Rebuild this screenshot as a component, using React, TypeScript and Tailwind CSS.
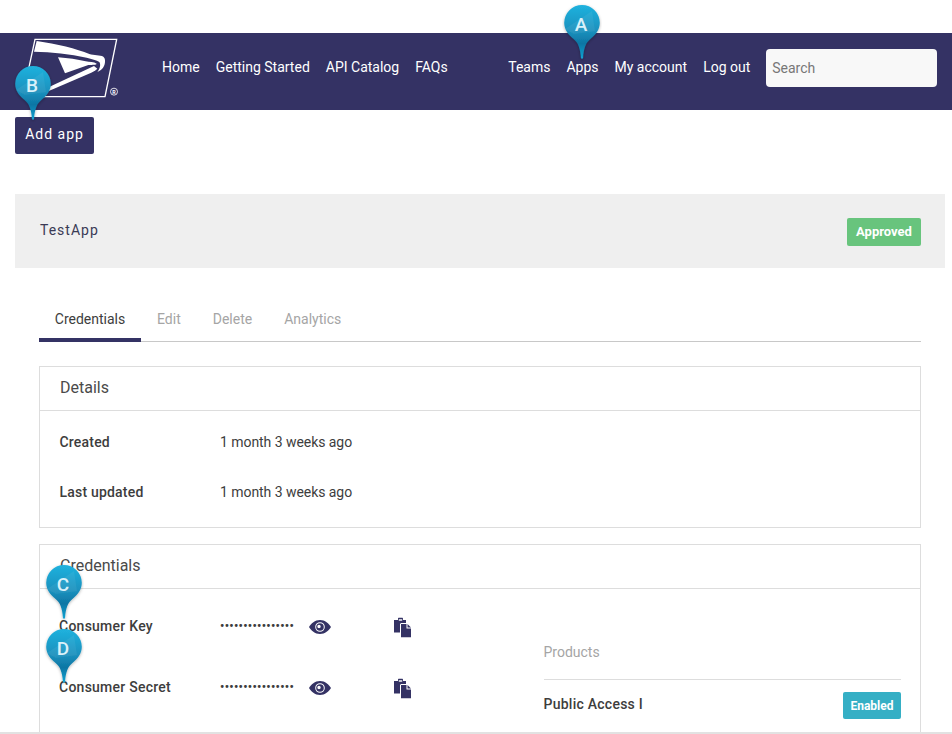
import React from "react";

function Pin({ letter, className }: { letter: string; className: string }) {
  const id = `pin-${letter}`;
  const shape =
    "M20 2a17.8 17.800 0 0 1 17.800 17.800c0 7-4 11.800-9.400 16.200-4.400 3.600-6.600 8.400-7.400 19.500h-2c-.8-11.100-3-15.900-7.400-19.500C6.200 31.600 2.200 26.800 2.200 19.800A17.800 17.800 0 0 1 20 2z";
  return (
    <div className={`absolute w-[40px] h-[58px] ${className}`}>
      <svg width="40" height="58" viewBox="0 0 40 58" className="absolute inset-0">
        <defs>
          <linearGradient id={id} x1="0" y1="0" x2="0" y2="1">
            <stop offset="0" stopColor="#20b2de" />
            <stop offset="0.5" stopColor="#1a8fbc" />
            <stop offset="0.72" stopColor="#0d76a4" />
            <stop offset="1" stopColor="#12a3d2" />
          </linearGradient>
          <filter id={`${id}-s`} x="-30%" y="-30%" width="160%" height="160%">
            <feDropShadow dx="0" dy="1" stdDeviation="1.6" floodColor="#000" floodOpacity="0.3" />
          </filter>
        </defs>
        <path d={shape} fill={`url(#${id})`} filter={`url(#${id}-s)`} />
        <path d="M3 26 30 8 33 28 12 31z" fill="#fff" opacity="0.06" />
      </svg>
      <span className="absolute left-0 right-[2px] top-[11px] text-center text-[19px] leading-[22px] text-[#d9f1fa] font-medium">
        {letter}
      </span>
    </div>
  );
}

function Logo() {
  return (
    <svg width="105" height="70" viewBox="0 0 315 210" className="shrink-0 ml-[20px] mt-px">
      <path d="M45 16H290L255 188H8z" fill="none" stroke="#fff" strokeWidth="4" />
      <path
        d="M50 21C110 30 170 44 208 60C222 65 240 62 250 68C258 74 256 90 250 100C246 107 240 111 232 114C240 104 243 92 238 84C230 78 215 76 200 71C150 60 95 54 42 53z"
        fill="#fff"
      />
      <path d="M114 70C145 72 172 76 197 82C208 84 222 84 230 89C228 93 220 92 205 93L135 118z" fill="#fff" />
      <path d="M60 172 222 96 232 104 C225 110 218 114 205 120L88 170z" fill="#fff" />
      <circle cx="282" cy="173" r="10.500" fill="none" stroke="#fff" strokeWidth="2.500" />
      <text x="282" y="179" textAnchor="middle" fontSize="16" fontWeight="700" fill="#fff" fontFamily="Roboto, sans-serif">R</text>
    </svg>
  );
}

function Eye() {
  return (
    <svg width="22" height="14" viewBox="0 0 22 14" className="block translate-y-px">
      <path
        fillRule="evenodd"
        d="M11 0c5 0 9 3.400 11 7-2 3.600-6 7-11 7S2 10.600 0 7c2-3.600 6-7 11-7zm0 2.200a4.800 4.800 0 1 0 0 9.600 4.800 4.800 0 0 0 0-9.600z"
        fill="#343264"
      />
      <path
        fillRule="evenodd"
        d="M11 3.200a3.800 3.800 0 1 0 0 7.600 3.800 3.800 0 0 0 0-7.600zm-1 1.600a1.700 1.700 0 1 1 0 3.400 1.700 1.700 0 0 1 0-3.400z"
        fill="#343264"
      />
    </svg>
  );
}

function Copy() {
  return (
    <svg width="18" height="20" viewBox="0 0 18 20" className="block translate-y-[1.500px]">
      <path d="M0 2.500h4V1.200C4 .5 4.500 0 5.200 0h2.600C8.500 0 9 .5 9 1.200v1.300h3v3H7.500C6.700 5.500 6 6.200 6 7v8H0z" fill="#343264" />
      <rect x="4.800" y="1.800" width="3.400" height="1.400" fill="#fff" />
      <path d="M7 6.500h5.500V11H17v9H7z" fill="#343264" />
      <path d="M13.500 6.500 17 10h-3.500z" fill="#343264" />
    </svg>
  );
}

function CredRow({ label }: { label: string }) {
  return (
    <div className="flex items-center h-[20px]">
      <span className="w-[161px] text-[14px] font-medium tracking-[0.25px] text-[#3d3d3d]">{label}</span>
      <span className="w-[89px] text-[12px] font-bold leading-[14px] tracking-[0.32px] text-[#3d3d3d] overflow-hidden whitespace-nowrap">
        ••••••••••••••••
      </span>
      <span className="w-[85px]"><Eye /></span>
      <Copy />
    </div>
  );
}

export default function App() {
  return (
    <div className="relative h-[734px] w-[952px] overflow-hidden bg-white font-['Roboto',sans-serif] text-[14px] text-[#3d3d3d]">
      <div className="pt-[33px]">
        <header className="flex h-[77px] bg-[#343264] text-white">
          <Logo />
          <nav className="flex gap-4 ml-[37px] pt-[24px] text-[14px] leading-[20px]">
            <span>Home</span>
            <span>Getting Started</span>
            <span>API Catalog</span>
            <span>FAQs</span>
          </nav>
          <nav className="flex gap-4 ml-[60.5px] pt-[24px] text-[14px] leading-[20px]">
            <span>Teams</span>
            <span>Apps</span>
            <span>My account</span>
            <span>Log out</span>
          </nav>
          <div className="ml-4 mt-4 flex h-[38px] w-[171px] items-center rounded-[4px] bg-[#f8f8f8] pl-[6px] text-[14px] text-[#777]">
            Search
          </div>
        </header>

        <div className="px-[15px] pr-[7px]">
          <button className="mt-[7px] flex h-[37px] w-[79px] items-center justify-center rounded-[2px] bg-[#343264] pb-[2px] text-[14px] tracking-[1px] text-white">
            Add app
          </button>

          <div className="mt-[40px] flex h-[74px] items-center justify-between bg-[#efefef] pl-[25px] pr-[24px]">
            <span className="text-[14px] tracking-[1px] text-[#3a3a55] -translate-y-px">TestApp</span>
            <span className="flex h-[28px] w-[74px] translate-y-px items-center justify-center rounded-[2px] bg-[#68c47d] text-[13px] font-bold text-white">
              Approved
            </span>
          </div>

          <div className="ml-[24px] mr-[24px]">
            <div className="mt-[30px] flex h-[44px] border-b border-[#c8c8c8] text-[14px]">
              <span className="h-[44px] w-[102px] border-b-[4px] border-[#343264] pt-[11px] text-center text-[#3d3d3d]">Credentials</span>
              <span className="ml-[16px] pt-[11px] text-[#a5a5a5]">Edit</span>
              <span className="ml-[32px] pt-[11px] text-[#a5a5a5]">Delete</span>
              <span className="ml-[32px] pt-[11px] text-[#a5a5a5]">Analytics</span>
            </div>

            <section className="mt-[24px] h-[162px] border border-[#dddddd]">
              <h2 className="flex h-[44px] items-center border-b border-[#dddddd] pb-[2px] pl-[20px] text-[16px] font-normal text-[#4a4a4a]">
                Details
              </h2>
              <div className="flex h-[20px] items-center mt-[21px] pl-[19.5px]">
                <span className="w-[160.5px] font-medium tracking-[0.2px]">Created</span>
                <span className="tracking-[-0.05px]">1 month 3 weeks ago</span>
              </div>
              <div className="flex h-[20px] items-center mt-[30px] pl-[19.5px]">
                <span className="w-[160.5px] font-medium tracking-[0.2px]">Last updated</span>
                <span className="tracking-[-0.05px]">1 month 3 weeks ago</span>
              </div>
            </section>

            <section className="mt-[16px] h-[200px] border border-[#dddddd]">
              <h2 className="flex h-[44px] items-center border-b border-[#dddddd] pb-[2px] pl-[20px] text-[16px] font-normal text-[#4a4a4a]">
                Credentials
              </h2>
              <div className="flex pl-[19px] pr-[19px]">
                <div className="w-[484.5px] pt-[27px] flex flex-col gap-[41px]">
                  <CredRow label="Consumer Key" />
                  <CredRow label="Consumer Secret" />
                </div>
                <div className="flex-1">
                  <div className="h-[91px] border-b border-[#dddddd] pt-[53px] text-[14px] text-[#a5a5a5]">Products</div>
                  <div className="flex items-start justify-between pt-[12px]">
                    <span className="font-medium tracking-[0.25px] leading-[24px]">Public Access I</span>
                    <span className="flex h-[27px] w-[58px] items-center justify-center rounded-[2px] bg-[#35afc5] text-[12px] font-bold text-white">
                      Enabled
                    </span>
                  </div>
                </div>
              </div>
            </section>
          </div>
        </div>
      </div>

      <div className="absolute bottom-0 left-0 right-0 h-[2px] bg-[#e2e2e2]" />

      <Pin letter="A" className="left-[562px] top-[3px]" />
      <Pin letter="B" className="left-[13px] top-[64px]" />
      <Pin letter="C" className="left-[44px] top-[563px]" />
      <Pin letter="D" className="left-[44px] top-[627px]" />
    </div>
  );
}
